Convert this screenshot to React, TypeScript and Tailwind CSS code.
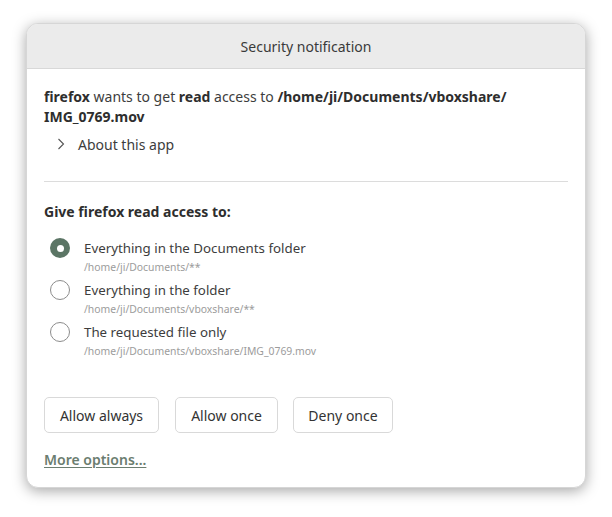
import React from "react";

const font = { fontFamily: '"Noto Sans", "Open Sans", sans-serif' };

function Radio({ checked }: { checked?: boolean }) {
  if (checked) {
    return (
      <div className="w-[20px] h-[20px] rounded-full bg-[#5b7565] flex items-center justify-center shrink-0">
        <div className="w-[7px] h-[7px] rounded-full bg-white" />
      </div>
    );
  }
  return <div className="w-[20px] h-[20px] rounded-full border border-[#8c8c8c] bg-white shrink-0" />;
}

function Option({ checked, label, path }: { checked?: boolean; label: string; path: string }) {
  return (
    <div className="flex items-start h-[42px]">
      <div className="w-[32px] flex justify-center">
        <Radio checked={checked} />
      </div>
      <div className="flex flex-col pl-[8px]">
        <div className="text-[13.3px] leading-[20px] text-[#3d3d3d]">{label}</div>
        <div className="text-[10.4px] leading-[14px] text-[#9c9c9c] mt-[2px]">{path}</div>
      </div>
    </div>
  );
}

export default function App() {
  return (
    <div className="w-[612px] h-[517px] bg-white pt-[23px] pl-[26px]" style={font}>
      <div className="w-[560px] h-[465px] rounded-[12px] bg-white shadow-[0_3px_14px_rgba(0,0,0,0.35)] border border-[#d6d6d6] overflow-hidden flex flex-col">
        <div className="h-[45px] bg-[#ebebeb] border-b border-[#d8d8d8] flex items-center justify-center text-[14px] text-[#3a3a3a] shrink-0">
          Security notification
        </div>
        <div className="px-[17px] pt-[18px] flex flex-col">
          <div className="text-[14px] leading-[20px] text-[#3d3d3d]">
            <span className="font-bold text-[#2e2e2e]">firefox</span> wants to get{" "}
            <span className="font-bold text-[#2e2e2e]">read</span> access to{" "}
            <span className="font-bold text-[#2e2e2e]">/home/ji/Documents/vboxshare/</span>
            <br />
            <span className="font-bold text-[#2e2e2e]">IMG_0769.mov</span>
          </div>
          <div className="flex items-center h-[20px] mt-[7px] text-[14px] text-[#3d3d3d]">
            <svg width="40" height="14" viewBox="0 0 40 14" className="shrink-0">
              <polyline points="14.5,2 19.5,7 14.5,12" fill="none" stroke="#555" strokeWidth="1.1" />
            </svg>
            <span className="ml-[-6px]">About this app</span>
          </div>
          <div className="h-px bg-[#dcdcdc] mt-[27px] mb-[20px]" />
          <div className="text-[14px] leading-[20px] font-bold text-[#2e2e2e]">Give firefox read access to:</div>
          <div className="flex flex-col mt-[16px]">
            <Option checked label="Everything in the Documents folder" path="/home/ji/Documents/**" />
            <Option label="Everything in the folder" path="/home/ji/Documents/vboxshare/**" />
            <Option label="The requested file only" path="/home/ji/Documents/vboxshare/IMG_0769.mov" />
          </div>
          <div className="flex mt-[33px]">
            <button className="h-[36px] w-[115px] rounded-[5px] border border-[#d9d9d9] bg-white text-[14px] text-[#333]">
              Allow always
            </button>
            <button className="ml-[16px] h-[36px] w-[103px] rounded-[5px] border border-[#d9d9d9] bg-white text-[14px] text-[#333]">
              Allow once
            </button>
            <button className="ml-[15px] h-[36px] w-[100px] rounded-[5px] border border-[#d9d9d9] bg-white text-[14px] text-[#333]">
              Deny once
            </button>
          </div>
          <div className="mt-[14px]">
            <span className="text-[14px] font-semibold text-[#6b7d70] underline underline-offset-2">More options...</span>
          </div>
        </div>
      </div>
    </div>
  );
}
